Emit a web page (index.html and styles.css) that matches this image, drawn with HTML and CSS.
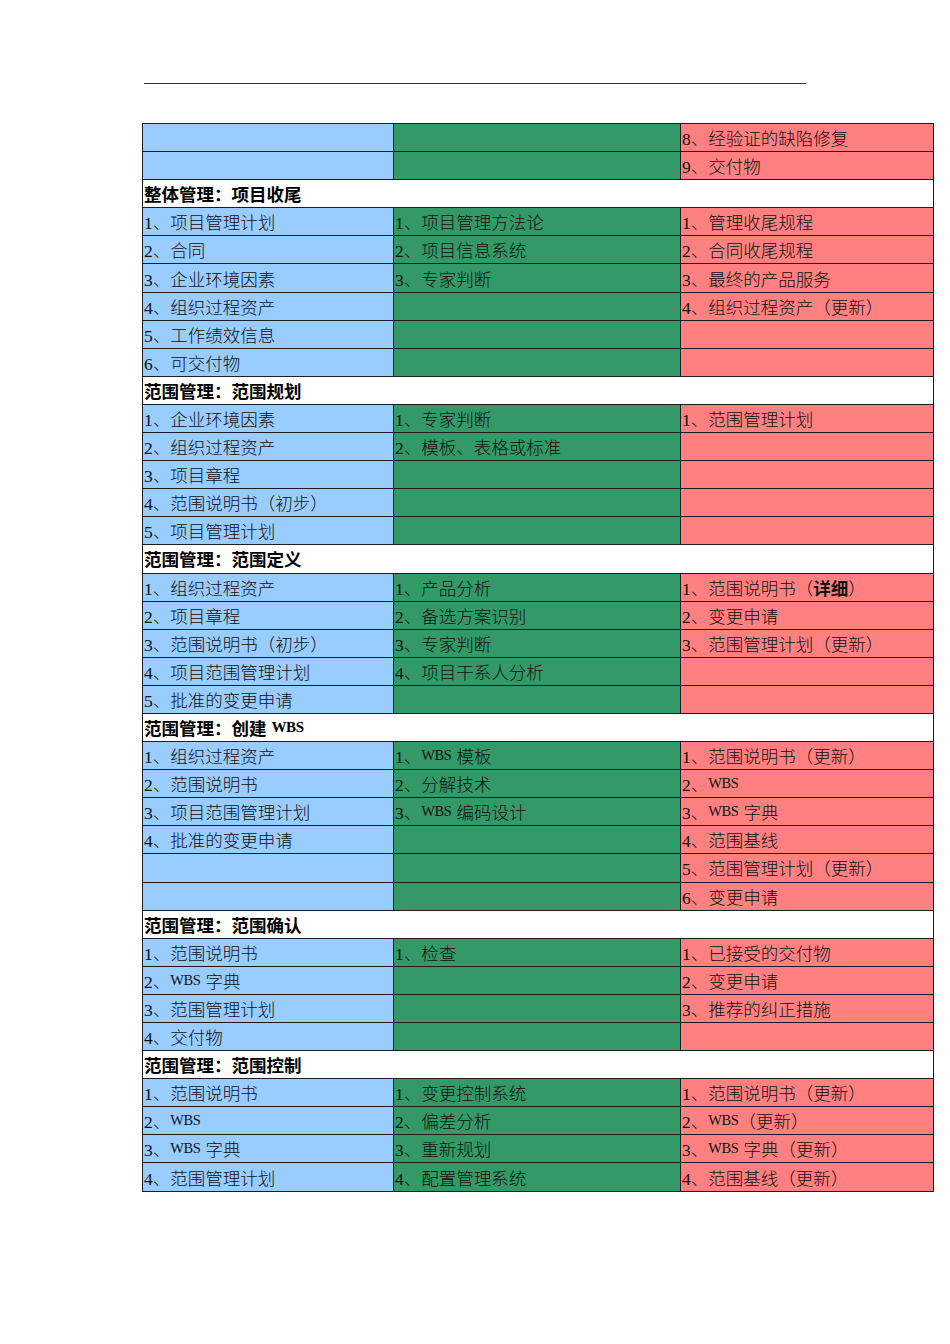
FILE: index.html
```html
<!DOCTYPE html>
<html lang="zh-CN">
<head>
<meta charset="utf-8">
<title>项目管理过程</title>
<link rel="stylesheet" href="styles.css">
</head>
<body>
<div class="page">
  <div class="rule"></div>
  <div class="sheet">
    <div class="row"><div class="c b"></div><div class="c g"></div><div class="c r">8、经验证的缺陷修复</div></div>
    <div class="row"><div class="c b"></div><div class="c g"></div><div class="c r">9、交付物</div></div>
    <div class="row hd">整体管理：项目收尾</div>
    <div class="row"><div class="c b">1、项目管理计划</div><div class="c g">1、项目管理方法论</div><div class="c r">1、管理收尾规程</div></div>
    <div class="row"><div class="c b">2、合同</div><div class="c g">2、项目信息系统</div><div class="c r">2、合同收尾规程</div></div>
    <div class="row"><div class="c b">3、企业环境因素</div><div class="c g">3、专家判断</div><div class="c r">3、最终的产品服务</div></div>
    <div class="row"><div class="c b">4、组织过程资产</div><div class="c g"></div><div class="c r">4、组织过程资产（更新）</div></div>
    <div class="row"><div class="c b">5、工作绩效信息</div><div class="c g"></div><div class="c r"></div></div>
    <div class="row"><div class="c b">6、可交付物</div><div class="c g"></div><div class="c r"></div></div>
    <div class="row hd">范围管理：范围规划</div>
    <div class="row"><div class="c b">1、企业环境因素</div><div class="c g">1、专家判断</div><div class="c r">1、范围管理计划</div></div>
    <div class="row"><div class="c b">2、组织过程资产</div><div class="c g">2、模板、表格或标准</div><div class="c r"></div></div>
    <div class="row"><div class="c b">3、项目章程</div><div class="c g"></div><div class="c r"></div></div>
    <div class="row"><div class="c b">4、范围说明书（初步）</div><div class="c g"></div><div class="c r"></div></div>
    <div class="row"><div class="c b">5、项目管理计划</div><div class="c g"></div><div class="c r"></div></div>
    <div class="row hd">范围管理：范围定义</div>
    <div class="row"><div class="c b">1、组织过程资产</div><div class="c g">1、产品分析</div><div class="c r">1、范围说明书（<b>详细</b>）</div></div>
    <div class="row"><div class="c b">2、项目章程</div><div class="c g">2、备选方案识别</div><div class="c r">2、变更申请</div></div>
    <div class="row"><div class="c b">3、范围说明书（初步）</div><div class="c g">3、专家判断</div><div class="c r">3、范围管理计划（更新）</div></div>
    <div class="row"><div class="c b">4、项目范围管理计划</div><div class="c g">4、项目干系人分析</div><div class="c r"></div></div>
    <div class="row"><div class="c b">5、批准的变更申请</div><div class="c g"></div><div class="c r"></div></div>
    <div class="row hd">范围管理：创建<span class="w hw">WBS</span></div>
    <div class="row"><div class="c b">1、组织过程资产</div><div class="c g">1、<span class="w sp">WBS</span>模板</div><div class="c r">1、范围说明书（更新）</div></div>
    <div class="row"><div class="c b">2、范围说明书</div><div class="c g">2、分解技术</div><div class="c r">2、<span class="w">WBS</span></div></div>
    <div class="row"><div class="c b">3、项目范围管理计划</div><div class="c g">3、<span class="w sp">WBS</span>编码设计</div><div class="c r">3、<span class="w sp">WBS</span>字典</div></div>
    <div class="row"><div class="c b">4、批准的变更申请</div><div class="c g"></div><div class="c r">4、范围基线</div></div>
    <div class="row"><div class="c b"></div><div class="c g"></div><div class="c r">5、范围管理计划（更新）</div></div>
    <div class="row"><div class="c b"></div><div class="c g"></div><div class="c r">6、变更申请</div></div>
    <div class="row hd">范围管理：范围确认</div>
    <div class="row"><div class="c b">1、范围说明书</div><div class="c g">1、检查</div><div class="c r">1、已接受的交付物</div></div>
    <div class="row"><div class="c b">2、<span class="w sp">WBS</span>字典</div><div class="c g"></div><div class="c r">2、变更申请</div></div>
    <div class="row"><div class="c b">3、范围管理计划</div><div class="c g"></div><div class="c r">3、推荐的纠正措施</div></div>
    <div class="row"><div class="c b">4、交付物</div><div class="c g"></div><div class="c r"></div></div>
    <div class="row hd">范围管理：范围控制</div>
    <div class="row"><div class="c b">1、范围说明书</div><div class="c g">1、变更控制系统</div><div class="c r">1、范围说明书（更新）</div></div>
    <div class="row"><div class="c b">2、<span class="w">WBS</span></div><div class="c g">2、偏差分析</div><div class="c r">2、<span class="w">WBS</span>（更新）</div></div>
    <div class="row"><div class="c b">3、<span class="w sp">WBS</span>字典</div><div class="c g">3、重新规划</div><div class="c r">3、<span class="w sp">WBS</span>字典（更新）</div></div>
    <div class="row"><div class="c b">4、范围管理计划</div><div class="c g">4、配置管理系统</div><div class="c r">4、范围基线（更新）</div></div>
  </div>
</div>
</body>
</html>
```
FILE: styles.css
```css
html, body {
  margin: 0;
  padding: 0;
  background: #ffffff;
}
.page {
  padding-top: 83px;
  padding-bottom: 150px;
}
.rule {
  width: 662px;
  height: 1px;
  margin-left: 144px;
  background: #333333;
}
.sheet {
  margin-top: 39px;
  margin-left: 142px;
  width: 792px;
  box-sizing: border-box;
  border: 1px solid #1c1c24;
  border-bottom: none;
  font-family: "Liberation Serif", "Noto Sans CJK SC", serif;
  font-size: 17.5px;
  color: #111111;
}
.row {
  display: grid;
  grid-template-columns: 251px 287px 1fr;
  height: 28.1px;
  box-sizing: border-box;
  border-bottom: 1px solid #1c1c24;
}
.c {
  display: flex;
  align-items: center;
  padding-left: 1px;
  white-space: nowrap;
  overflow: hidden;
  font-weight: 300;
}
.c.b {
  background: #99ccff;
  border-right: 1px solid #1c1c24;
}
.c.g {
  background: #339966;
  border-right: 1px solid #1c1c24;
}
.c.r {
  background: #ff8080;
}
.c b {
  font-weight: 700;
}
.w {
  font-family: "Liberation Serif", serif;
  font-size: 14.5px;
  font-weight: 400;
  letter-spacing: -0.4px;
}
.w.sp {
  margin-right: 5px;
}
.row.hd {
  display: flex;
  align-items: center;
  background: #ffffff;
  padding-left: 1px;
  font-family: "Noto Sans CJK SC", sans-serif;
  font-weight: 700;
  font-size: 17.5px;
  color: #000000;
}
.w.hw {
  margin-left: 5px;
  font-weight: 700;
  font-size: 15px;
}
```
